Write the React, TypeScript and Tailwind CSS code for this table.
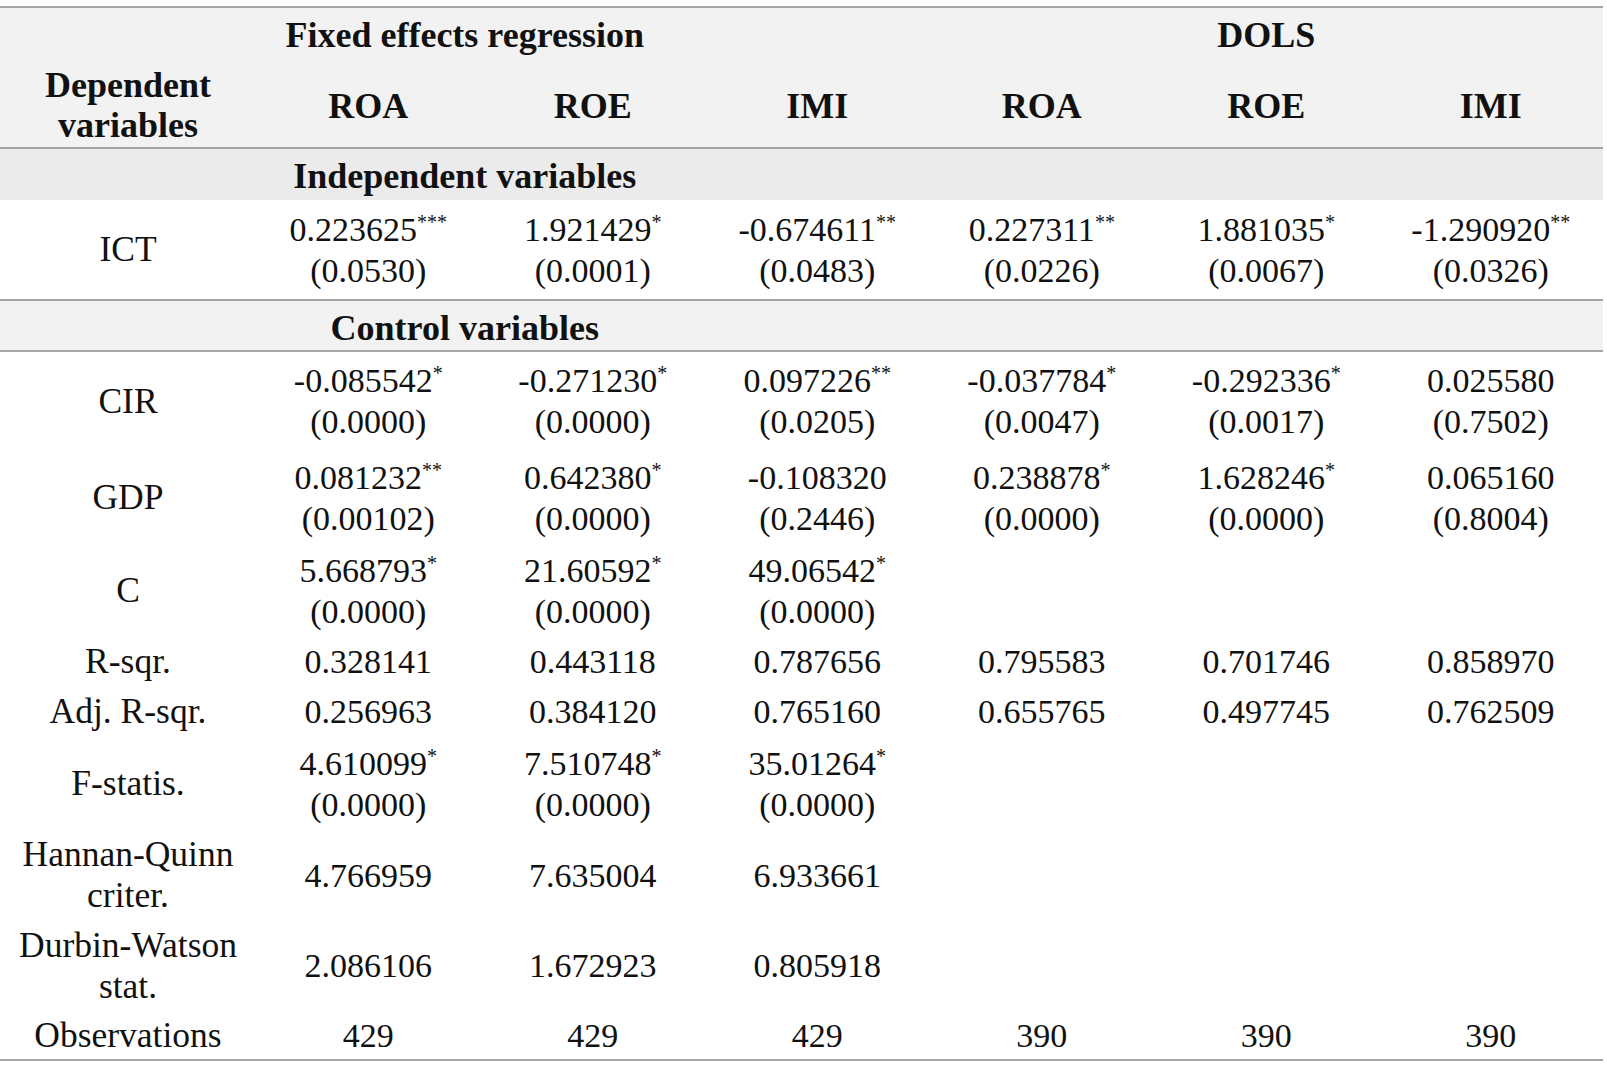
type Cell = { v: string; stars?: string; p?: string } | null

const COLS = 'grid grid-cols-[256px_repeat(6,224.5px)]'

// ─── Data ────────────────────────────────────────────────────────────────────

const controlRows: { label: string[]; h: string; cells: Cell[] }[] = [
  {
    label: ['CIR'],
    h: 'h-[98px]',
    cells: [
      { v: '-0.085542', stars: '*', p: '(0.0000)' },
      { v: '-0.271230', stars: '*', p: '(0.0000)' },
      { v: '0.097226', stars: '**', p: '(0.0205)' },
      { v: '-0.037784', stars: '*', p: '(0.0047)' },
      { v: '-0.292336', stars: '*', p: '(0.0017)' },
      { v: '0.025580', p: '(0.7502)' },
    ],
  },
  {
    label: ['GDP'],
    h: 'h-[95px]',
    cells: [
      { v: '0.081232', stars: '**', p: '(0.00102)' },
      { v: '0.642380', stars: '*', p: '(0.0000)' },
      { v: '-0.108320', p: '(0.2446)' },
      { v: '0.238878', stars: '*', p: '(0.0000)' },
      { v: '1.628246', stars: '*', p: '(0.0000)' },
      { v: '0.065160', p: '(0.8004)' },
    ],
  },
  {
    label: ['C'],
    h: 'h-[91px]',
    cells: [
      { v: '5.668793', stars: '*', p: '(0.0000)' },
      { v: '21.60592', stars: '*', p: '(0.0000)' },
      { v: '49.06542', stars: '*', p: '(0.0000)' },
      null,
      null,
      null,
    ],
  },
  {
    label: ['R-sqr.'],
    h: 'h-[50px]',
    cells: ['0.328141', '0.443118', '0.787656', '0.795583', '0.701746', '0.858970'].map((v) => ({ v })),
  },
  {
    label: ['Adj. R-sqr.'],
    h: 'h-[51px]',
    cells: ['0.256963', '0.384120', '0.765160', '0.655765', '0.497745', '0.762509'].map((v) => ({ v })),
  },
  {
    label: ['F-statis.'],
    h: 'h-[93px]',
    cells: [
      { v: '4.610099', stars: '*', p: '(0.0000)' },
      { v: '7.510748', stars: '*', p: '(0.0000)' },
      { v: '35.01264', stars: '*', p: '(0.0000)' },
      null,
      null,
      null,
    ],
  },
  {
    label: ['Hannan-Quinn', 'criter.'],
    h: 'h-[90px]',
    cells: [{ v: '4.766959' }, { v: '7.635004' }, { v: '6.933661' }, null, null, null],
  },
  {
    label: ['Durbin-Watson', 'stat.'],
    h: 'h-[91px]',
    cells: [{ v: '2.086106' }, { v: '1.672923' }, { v: '0.805918' }, null, null, null],
  },
  {
    label: ['Observations'],
    h: 'h-[50px]',
    cells: ['429', '429', '429', '390', '390', '390'].map((v) => ({ v })),
  },
]

const ictCells: Cell[] = [
  { v: '0.223625', stars: '***', p: '(0.0530)' },
  { v: '1.921429', stars: '*', p: '(0.0001)' },
  { v: '-0.674611', stars: '**', p: '(0.0483)' },
  { v: '0.227311', stars: '**', p: '(0.0226)' },
  { v: '1.881035', stars: '*', p: '(0.0067)' },
  { v: '-1.290920', stars: '**', p: '(0.0326)' },
]

// ─── Cells ───────────────────────────────────────────────────────────────────

function ValueCell({ cell }: { cell: Cell }) {
  if (!cell) return <div />
  return (
    <div className="flex flex-col items-center justify-center text-[34px] leading-[41px] text-[#111]">
      <span>
        {cell.v}
        {cell.stars && (
          <span className="relative top-[-12px] text-[20px] leading-none">{cell.stars}</span>
        )}
      </span>
      {cell.p && <span>{cell.p}</span>}
    </div>
  )
}

function Label({ lines }: { lines: string[] }) {
  return (
    <div className="flex flex-col items-center justify-center text-center text-[35.5px] leading-[41px] text-[#111]">
      {lines.map((l) => (
        <span key={l}>{l}</span>
      ))}
    </div>
  )
}

// ─── Page ────────────────────────────────────────────────────────────────────

export default function App() {
  return (
    <div className="h-[1072px] w-[1607px] bg-white pt-[6px] font-['Liberation_Serif',serif]">
      <div className="w-[1603px] border-t-2 border-[#a6a6a6]">
        {/* Header */}
        <div className={`${COLS} grid-rows-[54px_85px] border-b-2 border-[#a6a6a6] bg-[#f2f2f2] font-bold text-[36px] text-[#111]`}>
          <div className="col-start-1 col-end-5 row-start-1 flex items-center justify-center">
            Fixed effects regression
          </div>
          <div className="col-start-5 col-end-8 row-start-1 flex items-center justify-center">DOLS</div>
          <div className="col-start-1 row-start-2 flex flex-col items-center justify-center leading-[40px]">
            <span>Dependent</span>
            <span>variables</span>
          </div>
          {['ROA', 'ROE', 'IMI', 'ROA', 'ROE', 'IMI'].map((h, i) => (
            <div key={i} className="row-start-2 flex items-center justify-center pt-[2px]">
              {h}
            </div>
          ))}
        </div>

        {/* Independent variables */}
        <div className={`${COLS} h-[51px] bg-[#ebebeb] font-bold text-[36px] text-[#111]`}>
          <div className="col-span-4 flex items-center justify-center">Independent variables</div>
        </div>

        <div className={`${COLS} h-[101px] border-b-2 border-[#a6a6a6]`}>
          <Label lines={['ICT']} />
          {ictCells.map((c, i) => (
            <ValueCell key={i} cell={c} />
          ))}
        </div>

        {/* Control variables */}
        <div className={`${COLS} h-[51px] border-b-2 border-[#a6a6a6] bg-[#f2f2f2] font-bold text-[36px] text-[#111]`}>
          <div className="col-span-4 flex items-center justify-center">Control variables</div>
        </div>

        {controlRows.map((r, idx) => (
          <div
            key={r.label[0]}
            className={`${COLS} ${r.h} ${idx === controlRows.length - 1 ? 'border-b-2 border-[#a6a6a6]' : ''}`}
          >
            <Label lines={r.label} />
            {r.cells.map((c, i) => (
              <ValueCell key={i} cell={c} />
            ))}
          </div>
        ))}
      </div>
    </div>
  )
}
